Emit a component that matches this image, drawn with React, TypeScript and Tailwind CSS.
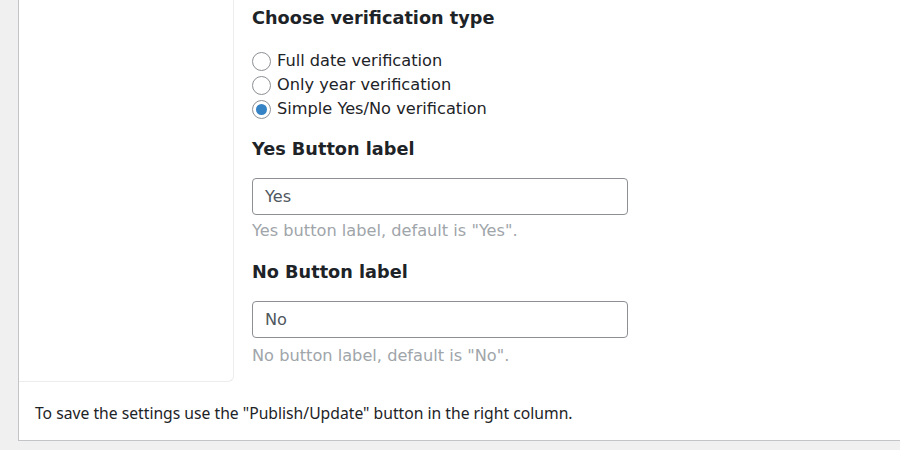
import React from "react";

const Radio = ({ checked, label }: { checked?: boolean; label: string }) => (
  <label className="flex items-center h-6">
    <span className="w-[19px] h-[19px] rounded-full border border-[#8c8f94] bg-white flex items-center justify-center shrink-0">
      {checked && <span className="w-[11px] h-[11px] rounded-full bg-[#3582c4]" />}
    </span>
    <span className="ml-[6px] text-[16.2px] leading-[24px] text-[#1d2327]">{label}</span>
  </label>
);

export default function App() {
  return (
    <div className="h-[450px] w-[900px] bg-[#f0f0f1] pl-[18px] overflow-hidden" style={{ fontFamily: '"DejaVu Sans", Verdana, sans-serif' }}>
      <div className="h-[441px] bg-white border-l border-b border-[#c3c4c7] flex flex-col">
        <div className="flex">
          <div className="w-[215px] h-[382px] border-r border-b border-[#ececec] rounded-br-[6px] shrink-0" />
          <div className="pl-[18px] pt-[6px]">
            <h2 className="text-[17.7px] font-bold text-[#1d2327] leading-[24px]">Choose verification type</h2>
            <div className="mt-[19px] flex flex-col">
              <Radio label="Full date verification" />
              <Radio label="Only year verification" />
              <Radio label="Simple Yes/No verification" checked />
            </div>
            <h2 className="mt-[16px] text-[17.7px] font-bold text-[#1d2327] leading-[24px]">Yes Button label</h2>
            <div className="mt-[17px] w-[376px] h-[37px] border border-[#8c8f94] rounded-[4px] flex items-center px-[12px] text-[16.2px] leading-[20px] text-[#50575e]">Yes</div>
            <p className="mt-[6px] text-[16.2px] text-[#a0a5aa] leading-[20px]">Yes button label, default is "Yes".</p>
            <h2 className="mt-[19px] text-[17.7px] font-bold text-[#1d2327] leading-[24px]">No Button label</h2>
            <div className="mt-[17px] w-[376px] h-[37px] border border-[#8c8f94] rounded-[4px] flex items-center px-[12px] text-[16.2px] leading-[20px] text-[#50575e]">No</div>
            <p className="mt-[8px] text-[16.2px] text-[#a0a5aa] leading-[20px]">No button label, default is "No".</p>
          </div>
        </div>
        <p className="mt-[21px] pl-[16px] text-[15.7px] leading-[20px] text-[#1d2327]" style={{ fontFamily: '"Noto Sans", "Open Sans", sans-serif' }}>
          To save the settings use the "Publish/Update" button in the right column.
        </p>
      </div>
    </div>
  );
}
